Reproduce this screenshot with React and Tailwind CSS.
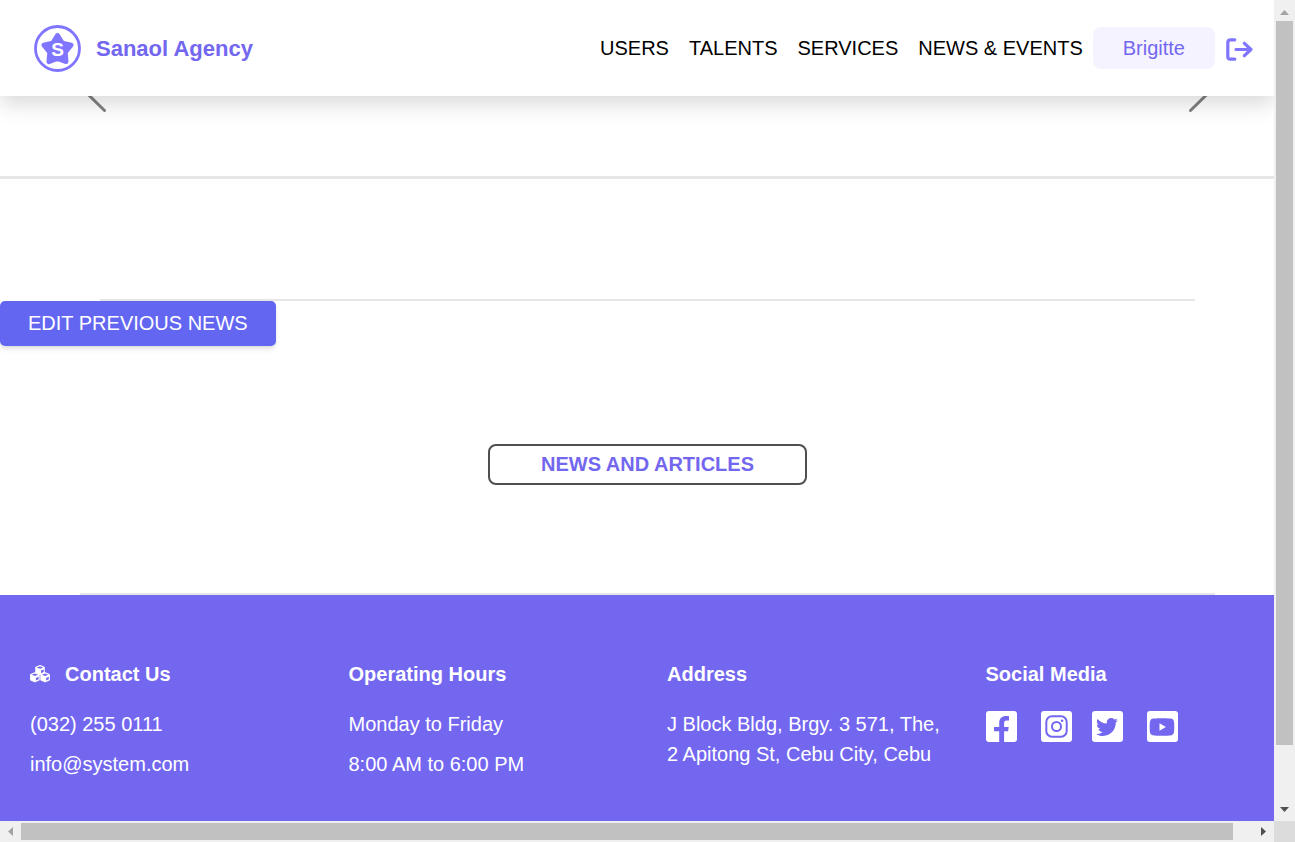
import React from "react";
import { FaTwitter, FaYoutube } from "react-icons/fa";

function Logo() {
  return (
    <svg viewBox="0 0 47 47" className="size-[47px]" aria-hidden="true">
      <circle cx="23.5" cy="23.5" r="22" fill="none" stroke="#8075ff" strokeWidth="2.8" />
      <path
        d="M23.5 10.3 L28.4 18 L37.3 20 L31.4 27.2 L32.2 36.8 L23.5 33.6 L14.8 36.8 L15.6 27.2 L9.7 20 L18.6 18 Z"
        fill="#8075ff"
        stroke="#8075ff"
        strokeWidth="4.6"
        strokeLinejoin="round"
      />
      <text
        x="23.5"
        y="31.4"
        textAnchor="middle"
        fontSize="19"
        fontWeight="bold"
        fill="#fff"
        fontFamily="Liberation Sans, sans-serif"
      >
        S
      </text>
    </svg>
  );
}

function LogoutIcon() {
  return (
    <svg
      viewBox="0 -2 27 25"
      className="h-[25px] w-[27px]"
      fill="none"
      stroke="#8075ff"
      strokeWidth="3.2"
      strokeLinecap="round"
      strokeLinejoin="round"
      aria-hidden="true"
    >
      <path d="M8.8 1.8H4.6Q1.8 1.8 1.8 4.6V18.4Q1.8 21.2 4.6 21.2H8.8" />
      <path d="M10 11.5H25M18.4 5.3L25 11.5L18.4 17.7" />
    </svg>
  );
}

function Chevron({ flipped }) {
  return (
    <svg
      viewBox="0 0 36 68"
      className={flipped ? "h-[68px] w-9 rotate-180" : "h-[68px] w-9"}
      fill="none"
      stroke="#808080"
      strokeWidth="3"
      strokeLinecap="round"
      aria-hidden="true"
    >
      <path d="M34.5 1.5L1.5 34L34.5 66.5" />
    </svg>
  );
}

function Cube({ x, y }) {
  return (
    <g transform={`translate(${x} ${y})`}>
      <path
        d="M0 -4.2L4 -2.6V2.4L0 4.2L-4 2.4V-2.6Z"
        fill="#fff"
        stroke="#fff"
        strokeWidth="1.6"
        strokeLinejoin="round"
      />
      <path d="M-3.2 -2.5L0 -3.8L3.2 -2.5L0 -1.3Z" fill="#7367f0" />
      <path d="M1 0.6L3.7 -0.6V1.9L1 3.3Z" fill="#7367f0" />
    </g>
  );
}

function CubesIcon() {
  return (
    <svg viewBox="0 0 20 20" className="size-5" aria-hidden="true">
      <Cube x={10} y={6} />
      <Cube x={4.9} y={13.3} />
      <Cube x={15.1} y={13.3} />
    </svg>
  );
}

const links = ["USERS", "TALENTS", "SERVICES", "NEWS & EVENTS"];

function Header() {
  return (
    <header className="relative z-10 flex h-24 shrink-0 items-center justify-between bg-white pr-[21px] pl-[34px] shadow-[0_8px_20px_rgba(0,0,0,0.15)]">
      <a href="#home" className="flex items-center gap-[15px] text-[22px] font-bold text-[#7367f0]">
        <Logo />
        Sanaol Agency
      </a>
      <nav className="flex items-center">
        {links.map((link) => (
          <a key={link} href="#" className="px-[10px] leading-[30px] text-black">
            {link}
          </a>
        ))}
        <button type="button" className="h-[42px] rounded-lg bg-[#f5f3ff] px-[30px] text-[#7367f0]">
          Brigitte
        </button>
        <button type="button" aria-label="Log out" className="ml-[11px]">
          <LogoutIcon />
        </button>
      </nav>
    </header>
  );
}

function Main() {
  return (
    <main className="w-screen">
      <div className="-mt-[52px] flex justify-between px-[70px]">
        <button type="button" aria-label="Previous slide">
          <Chevron />
        </button>
        <button type="button" aria-label="Next slide">
          <Chevron flipped />
        </button>
      </div>
      <hr className="mt-16 border-t-[3px] border-[#e6e6e6]" />
      <hr className="mx-[100px] mt-[120px] border-t-2 border-[#e6e6e6]" />
      <button
        type="button"
        className="block h-[45px] rounded-[5px] bg-[#6366f1] px-7 pb-0.5 text-white shadow-md"
      >
        EDIT PREVIOUS NEWS
      </button>
      <h2 className="mx-auto mt-[98px] flex h-[41px] w-[319px] items-center justify-center rounded-lg border-2 border-[#4f4f4f] pb-0.5 font-bold text-[#7367f0]">
        NEWS AND ARTICLES
      </h2>
      <hr className="mx-20 mt-[108px] border-t-2 border-[#e6e6e6]" />
    </main>
  );
}

function Column({ title, icon, children }) {
  return (
    <section className="pl-[30px]">
      <h3 className="mb-5 flex items-center gap-[15px] font-bold">
        {icon}
        {title}
      </h3>
      {children}
    </section>
  );
}

function SocialLink({ label, children }) {
  return (
    <a
      href="#"
      aria-label={label}
      className="flex size-[31px] items-center justify-center rounded-[3px] bg-white text-[#7367f0]"
    >
      {children}
    </a>
  );
}

function FacebookMark() {
  return (
    <svg viewBox="0 0 31 31" className="size-[31px]" aria-hidden="true">
      <path
        d="M13.2 31V20.2H8V15.9H13.2V12.2C13.2 7.6 15.8 5.1 20.2 5.1C21.4 5.1 22.3 5.2 23 5.3V9.4H20.6C18.6 9.4 18.1 10.5 18.1 12.2V15.9H22.7L22.1 20.2H18.1V31Z"
        fill="currentColor"
      />
    </svg>
  );
}

function InstagramMark() {
  return (
    <svg viewBox="0 0 31 31" className="size-[31px]" fill="none" stroke="currentColor" aria-hidden="true">
      <rect x="5.3" y="5.3" width="20.4" height="20.4" rx="5.6" strokeWidth="2" />
      <circle cx="15.5" cy="15.5" r="4.5" strokeWidth="2" />
      <circle cx="21.1" cy="9.8" r="1.3" fill="currentColor" stroke="none" />
    </svg>
  );
}

function Footer() {
  return (
    <footer className="grid grow grid-cols-4 bg-[#7367f0] pt-16 leading-[30px] text-white">
      <Column title="Contact Us" icon={<CubesIcon />}>
        <p className="mb-[10px]">(032) 255 0111</p>
        <p>info@system.com</p>
      </Column>
      <Column title="Operating Hours">
        <p className="mb-[10px]">Monday to Friday</p>
        <p>8:00 AM to 6:00 PM</p>
      </Column>
      <Column title="Address">
        <p>
          J Block Bldg, Brgy. 3 571, The,
          <br />2 Apitong St, Cebu City, Cebu
        </p>
      </Column>
      <Column title="Social Media">
        <div className="flex gap-5 pt-0.5">
          <div className="flex gap-6">
            <SocialLink label="Facebook">
              <FacebookMark />
            </SocialLink>
            <SocialLink label="Instagram">
              <InstagramMark />
            </SocialLink>
          </div>
          <div className="flex gap-6">
            <SocialLink label="Twitter">
              <FaTwitter className="size-[22px]" />
            </SocialLink>
            <SocialLink label="YouTube">
              <FaYoutube className="size-[26px]" />
            </SocialLink>
          </div>
        </div>
      </Column>
    </footer>
  );
}

function VerticalBar() {
  return (
    <div className="flex flex-col items-center bg-[#f0f0f0]" aria-hidden="true">
      <div className="flex h-[21px] shrink-0 items-center">
        <svg viewBox="0 0 9 5" className="mt-1 h-[5px] w-[9px]">
          <path d="M0 5L4.5 0L9 5Z" fill="#a3a3a3" />
        </svg>
      </div>
      <div className="flex w-full grow flex-col items-center">
        <div className="h-[93%] w-[17px] bg-[#c1c1c1]" />
      </div>
      <div className="flex h-[21px] shrink-0 items-center">
        <svg viewBox="0 0 9 5" className="mb-0.5 h-[5px] w-[9px]">
          <path d="M0 0L4.5 5L9 0Z" fill="#505050" />
        </svg>
      </div>
    </div>
  );
}

function HorizontalBar() {
  return (
    <div className="flex items-center bg-[#f0f0f0]" aria-hidden="true">
      <div className="flex w-[21px] shrink-0 justify-center">
        <svg viewBox="0 0 5 9" className="h-[9px] w-[5px]">
          <path d="M5 0L0 4.5L5 9Z" fill="#a3a3a3" />
        </svg>
      </div>
      <div className="grow">
        <div className="h-[17px] w-[98.4%] bg-[#c1c1c1]" />
      </div>
      <div className="flex w-[21px] shrink-0 justify-center">
        <svg viewBox="0 0 5 9" className="h-[9px] w-[5px]">
          <path d="M0 0L5 4.5L0 9Z" fill="#505050" />
        </svg>
      </div>
    </div>
  );
}

export default function App() {
  return (
    <div className="grid h-screen grid-cols-[minmax(0,1fr)_21px] grid-rows-[minmax(0,1fr)_21px] overflow-hidden bg-white font-['Liberation_Sans',Arial,sans-serif] text-[20px]">
      <div className="flex min-w-0 flex-col overflow-hidden">
        <Header />
        <Main />
        <Footer />
      </div>
      <VerticalBar />
      <HorizontalBar />
      <div className="bg-[#dcdcdc]" />
    </div>
  );
}
